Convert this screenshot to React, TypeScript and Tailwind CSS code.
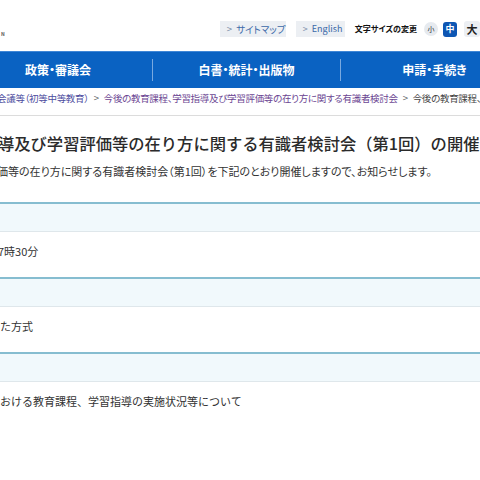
const navItems = ['政策・審議会', '白書・統計・出版物', '申請・手続き'];

const sections = [
  { text: '7時30分', shift: 'ml-[-2px]' },
  { text: 'た方式', shift: 'ml-0' },
  { text: 'おける教育課程、学習指導の実施状況等について', shift: 'ml-0' },
];

export default function App() {
  return (
    <div className="h-[480px] w-[480px] overflow-hidden bg-white font-['Noto_Sans_CJK_JP','Noto_Sans',sans-serif] text-[#333]">
      {/* Header */}
      <div className="flex h-[51px] items-start whitespace-nowrap">
        <div className="w-[228px] pt-[31px] pl-[1px] text-[5px] leading-[6px] font-bold text-[#555]">N</div>
        <div className="mt-[21px] flex items-center">
          <a className="flex h-[16px] w-[66px] items-center bg-[#eceff3] pl-[7px] text-[9.5px] text-[#3a68a8] [font-feature-settings:'palt']">
            <span className="mr-[4px] text-[#7a8ca6]">&gt;</span>サイトマップ
          </a>
          <a className="ml-[10px] flex h-[16px] w-[49px] items-center bg-[#eceff3] pl-[7px] text-[9px] text-[#3a68a8]">
            <span className="mr-[4px] text-[#7a8ca6]">&gt;</span>English
          </a>
          <span className="ml-[10px] text-[8px] font-bold text-[#111] [font-feature-settings:'palt']">文字サイズの変更</span>
          <span className="ml-[7px] flex h-[14px] w-[14px] items-center justify-center rounded-full bg-[#e6eaef] text-[7px] text-[#333]">小</span>
          <span className="ml-[5px] flex h-[15px] w-[14px] items-center justify-center rounded-[3px] bg-[#0d56b3] text-[9px] font-bold text-white">中</span>
          <span className="ml-[7px] flex h-[16px] w-[16px] items-center justify-center rounded-[3px] bg-[#eceff3] text-[11px] font-bold text-[#222]">大</span>
        </div>
      </div>

      {/* Global nav */}
      <div className="flex h-[37px] items-center border-t border-[#3f86d6] bg-[#0a62c2] whitespace-nowrap">
        <div className="ml-[-36px] flex items-center">
          {navItems.map((item, i) => (
            <div key={item} className="flex w-[188px] items-center">
              {i > 0 && <span className="h-[22px] w-[1px] bg-[#79a9e0]" />}
              <span className="flex-1 text-center text-[12px] font-bold text-white [font-feature-settings:'palt']">{item}</span>
            </div>
          ))}
        </div>
      </div>

      {/* Breadcrumb */}
      <div className="flex h-[28px] items-center overflow-hidden border-b border-[#dcdcdc] pb-[6px] text-[9.5px] tracking-[-0.3px] whitespace-nowrap [font-feature-settings:'palt']">
        <span className="ml-[-3px] text-[#4d4c9e]">会議等（初等中等教育）</span>
        <span className="mx-[5px] text-[#666]">&gt;</span>
        <span className="text-[#6b4592]">今後の教育課程、学習指導及び学習評価等の在り方に関する有識者検討会</span>
        <span className="mx-[5px] text-[#666]">&gt;</span>
        <span className="text-[#444]">今後の教育課程、学習指導及び学習評価等</span>
      </div>

      {/* Title */}
      <h1 className="mt-[15px] ml-[-2px] overflow-hidden text-[16.3px] leading-[24px] font-medium whitespace-nowrap text-[#2b2b2b]">
        導及び学習評価等の在り方に関する有識者検討会（第1回）の開催について
      </h1>
      <p className="mt-[8px] ml-[-3px] text-[11px] leading-[16px] whitespace-nowrap text-[#333] [font-feature-settings:'palt']">
        価等の在り方に関する有識者検討会（第1回）を下記のとおり開催しますので、お知らせします。
      </p>

      {/* Outline table */}
      <div className="mt-[23px]">
        {sections.map((s) => (
          <div key={s.text} className="border-t-2 border-[#86bdd0]">
            <div className="h-[28px] border-b border-[#dfe7eb] bg-[#f1f9fc]" />
            <div className="h-[45px] pt-[11px]">
              <p className={`${s.shift} text-[11px] leading-[16px] whitespace-nowrap text-[#333]`}>{s.text}</p>
            </div>
          </div>
        ))}
      </div>
    </div>
  );
}
